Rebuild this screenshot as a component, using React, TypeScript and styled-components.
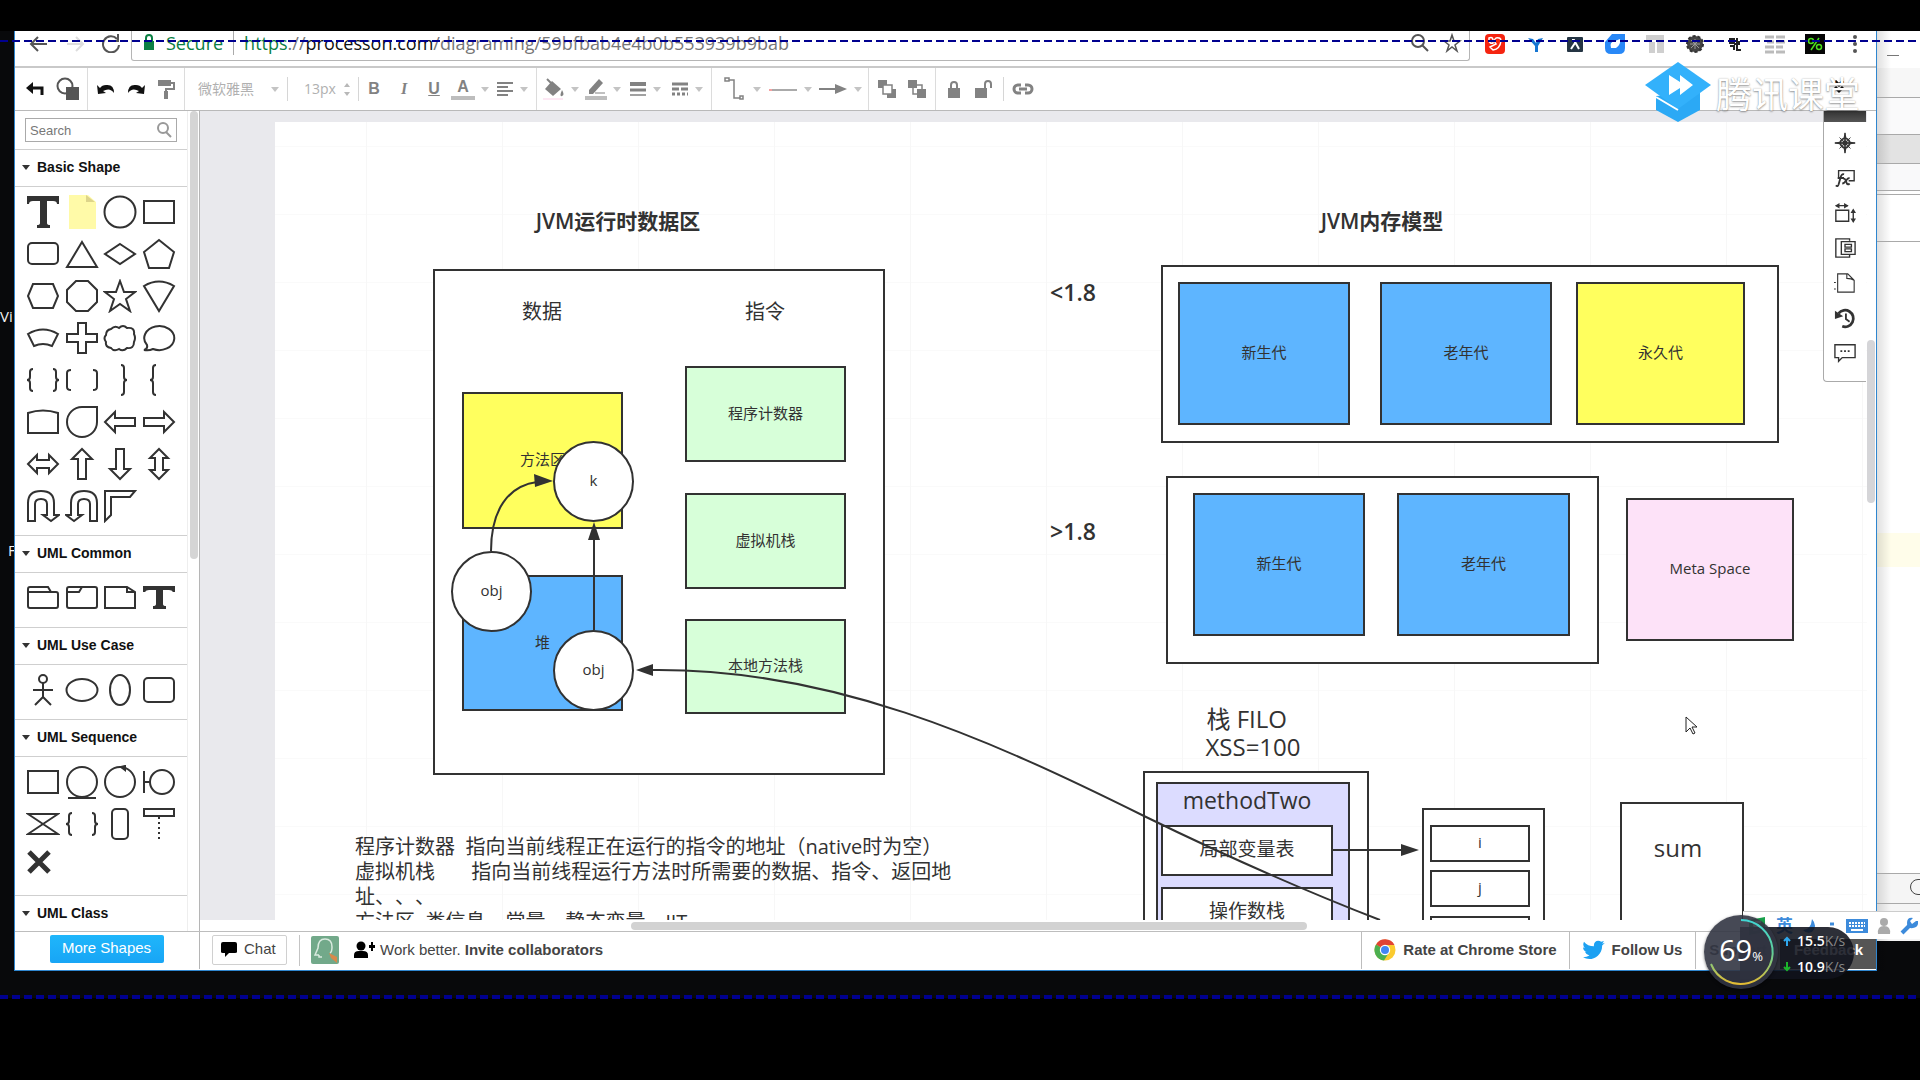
import React from 'react';
import styled, { createGlobalStyle, css } from 'styled-components';

const SANS = '"Liberation Sans", Arial, "Noto Sans CJK SC", sans-serif';
const HUMAN = '"Open Sans", "Noto Sans CJK SC", sans-serif';
const INK = '#323232';

const GlobalStyle = createGlobalStyle`
  * { box-sizing: border-box; }
  body { margin: 0; background: #000; text-spacing-trim: space-all; }
  button, input, select { font: inherit; color: inherit; margin: 0; padding: 0; border: 0; background: none; outline: none; }
  a { color: inherit; text-decoration: none; }
`;

/* ---------- desktop ---------- */

const Desktop = styled.div`
  position: relative;
  display: flex;
  height: 100vh;
  padding: 31px 0 109px;
  overflow: hidden;
  background: linear-gradient(#000 31px, #08090b 31px, #08090b calc(100vh - 82px), #000 calc(100vh - 82px));
  font-family: ${SANS};
  color: #333;
`;

const LeftEdge = styled.div`
  position: relative;
  flex: 0 0 14px;
  overflow: hidden;
  color: #f2f2f2;
  font: 15px/20px ${HUMAN};
`;

const DesktopLabel = styled.span<{ $x: number; $y: number }>`
  position: absolute;
  left: ${p => p.$x}px;
  top: ${p => p.$y}px;
`;

const RightEdge = styled.div`
  flex: 0 0 43px;
  display: flex;
  flex-direction: column;
  overflow: hidden;
  background: #fff;
`;

const Strip = styled.div<{ $h: number; $bg: string; $line?: boolean }>`
  flex: 0 0 ${p => p.$h}px;
  position: relative;
  overflow: hidden;
  background: linear-gradient(90deg, rgba(0, 0, 0, 0.12), transparent 14px), ${p => p.$bg};
  border-bottom: ${p => (p.$line ? '1px solid #a9a9a9' : '0')};
`;

const MinimizeMark = styled.i`
  display: block;
  width: 12px;
  height: 1px;
  margin: 24px 0 0 10px;
  background: #777;
`;

const RoundKnob = styled.i`
  display: block;
  width: 18px;
  height: 16px;
  margin: 5px 0 0 33px;
  border: 1px solid #444;
  border-radius: 8px;
`;

const Dashes = styled.div<{ $top?: number; $bottom?: number; $h: number }>`
  position: absolute;
  left: 0;
  right: 0;
  ${p => (p.$top !== undefined ? `top: ${p.$top}px;` : `bottom: ${p.$bottom}px;`)}
  height: ${p => p.$h}px;
  background: repeating-linear-gradient(90deg, #00008f 0 8px, transparent 8px 12px);
  pointer-events: none;
`;

/* ---------- browser ---------- */

const Browser = styled.main`
  flex: 1;
  min-width: 0;
  display: flex;
  flex-direction: column;
  background: #fff;
  border: 1px solid #2f86cf;
  border-top: 0;
`;

const AddressRow = styled.header`
  flex: 0 0 37px;
  display: flex;
  align-items: flex-start;
  padding-left: 6px;
  border-bottom: 2px solid #c9c9c9;
  overflow: hidden;
`;

const NavButton = styled.button`
  width: 36px;
  height: 24px;
  display: grid;
  place-items: center;
`;

const AddressBox = styled.div`
  flex: 1;
  display: flex;
  align-items: center;
  height: 30px;
  margin-left: 2px;
  padding: 0 1px 6px 11px;
  border: solid #b5b5b5;
  border-width: 0 1px 1px;
  border-radius: 0 0 3px 3px;
  font: 18px/24px ${HUMAN};
  color: #777;
`;

const Secure = styled.span`
  display: flex;
  align-items: center;
  gap: 11px;
  padding-right: 10px;
  border-right: 1px solid #aaa;
  color: #0b8043;
`;

const Url = styled.span`
  flex: 1;
  padding-left: 10px;
  white-space: nowrap;
  em { font-style: normal; color: #0b8043; }
  b { font-weight: 400; color: #111; }
`;

const AddressIcon = styled.button`
  width: 32px;
  height: 24px;
  display: grid;
  place-items: center;
`;

const Extensions = styled.div`
  display: flex;
  padding: 0 3px;
`;

const Extension = styled.button`
  width: 40px;
  height: 32px;
  padding: 3px 0 0 3px;
  display: grid;
  justify-content: center;
  align-content: start;
`;

/* ---------- toolbar ---------- */

const Toolbar = styled.div`
  flex: 0 0 43px;
  display: flex;
  border-bottom: 1px solid #b9b9b9;
  color: #828282;
`;

const ToolGroup = styled.div<{ $last?: boolean }>`
  display: flex;
  align-items: center;
  padding: 0 3px;
  border-right: ${p => (p.$last ? '0' : '1px solid #dcdcdc')};
`;

const Tool = styled.button<{ $dark?: boolean; $w?: number }>`
  width: ${p => p.$w ?? 30}px;
  height: 36px;
  display: flex;
  align-items: center;
  justify-content: center;
  gap: 6px;
  color: ${p => (p.$dark ? '#111' : 'inherit')};
`;

const Caret = styled.i`
  border: 4px solid transparent;
  border-top: 5px solid #c4c4c4;
  border-bottom: 0;
`;

const Field = styled.label<{ $w: number; $indent: number }>`
  display: flex;
  align-items: center;
  justify-content: space-between;
  width: ${p => p.$w}px;
  height: 24px;
  padding: 0 8px 0 ${p => p.$indent}px;
  border-right: 1px solid #d6d6d6;
  color: #b0b0b0;
  font: 14px/24px ${HUMAN};
  select { appearance: none; width: 70px; }
  input { width: 36px; }
`;

const Spin = styled.span`
  display: grid;
  gap: 5px;
  &::before { content: ''; border: 3px solid transparent; border-bottom: 4px solid #b8b8b8; border-top: 0; }
  &::after { content: ''; border: 3px solid transparent; border-top: 4px solid #b8b8b8; border-bottom: 0; }
`;

const ShortRule = styled.i`
  width: 1px;
  height: 24px;
  margin: 0 4px;
  background: #d6d6d6;
`;

const Glyph = styled.span<{ $italic?: boolean; $under?: boolean; $bar?: boolean }>`
  font: ${p => (p.$italic ? 'italic ' : '')}bold 16px/18px ${p => (p.$italic ? '"Liberation Serif", serif' : SANS)};
  text-decoration: ${p => (p.$under ? 'underline' : 'none')};
  ${p => p.$bar && css`padding: 0 6px; border-bottom: 4px solid #bdbdbd;`}
`;

/* ---------- body ---------- */

const Body = styled.div`
  flex: 1;
  min-height: 0;
  display: flex;
`;

const Sidebar = styled.aside`
  flex: 0 0 185px;
  display: flex;
  border-right: 1px solid #b5b5b5;
  overflow: hidden;
`;

const SidebarContent = styled.div`
  flex: 0 0 173px;
  display: flex;
  flex-direction: column;
  border-right: 1px solid #eee;
  overflow: hidden;
`;

const SidebarThumb = styled.div`
  width: 8px;
  height: 448px;
  margin: 0 0 0 2px;
  background: #d5d5d5;
  border-radius: 4px;
`;

const SearchRow = styled.div`
  flex: none;
  padding: 7px 10px;
  border-bottom: 1px solid #cfcfcf;
`;

const SearchBox = styled.label`
  display: flex;
  align-items: center;
  height: 24px;
  padding: 0 4px;
  border: 1px solid #aaa;
  font-size: 13px;
  color: #666;
  input { flex: 1; min-width: 0; }
  input::placeholder { color: #777; opacity: 1; }
`;

const SectionTitle = styled.button`
  flex: none;
  display: flex;
  align-items: center;
  gap: 7px;
  width: 100%;
  height: 37px;
  padding: 0 7px 2px;
  border-bottom: 1px solid #cfcfcf;
  color: #111;
  font-size: 14px;
  font-weight: bold;
  i { border: 4px solid transparent; border-top: 5px solid #333; border-bottom: 0; }
`;

const ShapeGrid = styled.div`
  flex: none;
  display: grid;
  grid-template-columns: repeat(4, 1fr);
  grid-auto-rows: 42px;
  padding: 4px 9px 8px;
  border-bottom: 1px solid #cfcfcf;
`;

const ShapeButton = styled.button`
  display: grid;
  place-items: center;
`;

const Workspace = styled.section`
  flex: 1;
  min-width: 0;
  display: flex;
  background: #fff;
`;

const CanvasColumn = styled.div`
  flex: 1;
  min-width: 0;
  display: flex;
  flex-direction: column;
`;

const Stage = styled.div`
  position: relative;
  flex: 1;
  min-height: 0;
  display: flex;
  padding: 11px 0 0 75px;
  overflow: hidden;
  background: #e9e9ed;
`;

const Page = styled.div`
  position: relative;
  flex: 1;
  background-color: #fff;
  background-image: linear-gradient(90deg, #f7f7f7 1px, transparent 1px), linear-gradient(#fafafa 1px, transparent 1px);
  background-size: 136px 136px, 136px 68px;
  background-position: 91px 24px, 24px 24px;
`;

const HTrack = styled.div`
  flex: 0 0 11px;
  padding: 2px 0 1px 431px;
`;

const HThumb = styled.div`
  width: 676px;
  height: 8px;
  border-radius: 4px;
  background: #d2d2d2;
`;

const VTrack = styled.div`
  flex: 0 0 9px;
  padding: 229px 1px 0 0;
`;

const VThumb = styled.div`
  height: 163px;
  border-radius: 4px;
  background: #d5d5d8;
`;

const Dock = styled.nav`
  position: absolute;
  top: 0;
  right: 1px;
  width: 43px;
  display: flex;
  flex-direction: column;
  align-items: center;
  padding-bottom: 11px;
  background: #fff;
  border: solid #aaa;
  border-width: 0 0 1px 1px;
  border-bottom-left-radius: 4px;
`;

const DockHandle = styled.div`
  align-self: stretch;
  height: 11px;
  margin-bottom: 3px;
  background: linear-gradient(#333, #555);
`;

const DockButton = styled.button`
  width: 40px;
  height: 35px;
  display: grid;
  place-items: center;
`;

/* ---------- diagram ---------- */

const Node = styled.div<{ $x: number; $y: number; $w: number; $h: number; $fill: string; $round?: boolean; $size: number; $top?: boolean }>`
  position: absolute;
  left: ${p => p.$x}px;
  top: ${p => p.$y}px;
  width: ${p => p.$w}px;
  height: ${p => p.$h}px;
  display: flex;
  align-items: ${p => (p.$top ? 'flex-start' : 'center')};
  justify-content: center;
  border: 2px solid ${INK};
  border-radius: ${p => (p.$round ? '50%' : '0')};
  background: ${p => p.$fill};
  padding-bottom: 2px;
  font: ${p => p.$size}px/${p => p.$size + 10}px ${HUMAN};
  white-space: pre;
  color: ${INK};
`;

const Label = styled.div<{ $x: number; $y: number; $w: number; $size?: number; $bold?: boolean; $left?: boolean; $lh?: number }>`
  position: absolute;
  left: ${p => p.$x}px;
  top: ${p => p.$y}px;
  width: ${p => p.$w}px;
  font: ${p => (p.$bold ? 600 : 400)} ${p => p.$size ?? 20}px/${p => p.$lh ?? 26}px ${HUMAN};
  text-align: ${p => (p.$left ? 'left' : 'center')};
  white-space: pre;
  color: ${INK};
`;

const Wires = styled.svg`
  position: absolute;
  left: 0;
  top: 0;
  width: 100%;
  height: 100%;
  pointer-events: none;
`;

const Pointer = styled.svg`
  position: absolute;
  left: 1410px;
  top: 594px;
`;

/* ---------- footer ---------- */

const Footer = styled.footer`
  flex: 0 0 39px;
  display: flex;
  padding-bottom: 1px;
  border-top: 1px solid #bdbdbd;
  font-size: 15px;
  line-height: 18px;
  color: #444;
`;

const FooterLeft = styled.div`
  flex: 0 0 185px;
  display: flex;
  align-items: center;
  justify-content: center;
  padding: 0 1px 3px 0;
  border-right: 1px solid #b5b5b5;
`;

const MoreShapes = styled.button`
  width: 114px;
  height: 28px;
  padding-bottom: 2px;
  border-radius: 2px;
  background: linear-gradient(#1fb6fb, #18a5f5);
  color: #fff;
`;

const ChatButton = styled.button`
  display: flex;
  align-items: center;
  gap: 7px;
  width: 75px;
  height: 30px;
  margin: 3px 0 0 12px;
  padding: 0 0 2px 8px;
  border: 1px solid #d0d0d0;
  border-radius: 2px;
`;

const FooterRule = styled.i`
  width: 1px;
  margin: 3px 11px 3px 12px;
  background: #c4c4c4;
`;

const Avatar = styled.svg`
  margin-top: 4px;
`;

const Invite = styled.a`
  display: flex;
  align-items: center;
  gap: 5px;
  margin-left: 14px;
  padding-bottom: 2px;
`;

const Grow = styled.div`
  flex: 1;
`;

const FooterLink = styled.a<{ $w: number; $dark?: boolean }>`
  width: ${p => p.$w}px;
  display: flex;
  align-items: center;
  justify-content: center;
  gap: 7px;
  padding-bottom: 2px;
  border-left: 1px solid #bdbdbd;
  font-weight: bold;
  white-space: nowrap;
  ${p => p.$dark && css`background: #555; color: #fff; border-left-color: #555;`}
`;

/* ---------- overlays ---------- */

const Watermark = styled.div`
  position: absolute;
  top: 62px;
  right: 60px;
  display: flex;
  align-items: center;
  gap: 5px;
  color: #fff;
  font: 36px/60px "Noto Sans CJK SC", sans-serif;
  text-shadow: 0 1px 2px rgba(0, 0, 0, 0.4), 0 0 1px rgba(0, 0, 0, 0.25);
  pointer-events: none;
`;

const Expand = styled.button`
  margin-left: auto;
  padding-right: 30px;
  color: #111;
`;

const ImeBar = styled.div`
  position: absolute;
  right: 0;
  bottom: 141px;
  width: 177px;
  height: 28px;
  display: flex;
  align-items: center;
  gap: 9px;
  padding-left: 4px;
  border-top: 1px solid #ccc;
  background: #fff;
  color: #3d8bdb;
  font: bold 17px/24px ${HUMAN};
  white-space: nowrap;
`;

const Speed = styled.div`
  position: absolute;
  right: 66px;
  bottom: 91px;
  display: flex;
  align-items: center;
  width: 150px;
  height: 74px;
`;

const SpeedPill = styled.div`
  position: absolute;
  inset: 12px 0 10px 36px;
  display: flex;
  flex-direction: column;
  gap: 6px;
  padding: 4px 0 0 43px;
  border-radius: 0 26px 26px 0;
  background: rgba(16, 18, 28, 0.88);
  color: #888;
  font: 14px/20px ${HUMAN};
  b { color: #fff; font-weight: 600; }
`;

const SpeedLine = styled.span`
  display: flex;
  align-items: center;
  svg { margin-right: 6px; }
`;

const Dial = styled.div`
  position: relative;
  display: grid;
  place-items: center;
  width: 74px;
  height: 74px;
  padding-top: 2px;
  border-radius: 50%;
  background: rgba(50, 53, 66, 0.9);
  box-shadow: 0 1px 3px rgba(0, 0, 0, 0.5);
  color: #fff;
  font: 29px/34px ${HUMAN};
  svg { position: absolute; inset: 0; }
  small { font-size: 13px; }
`;

/* ---------- icon drawings ---------- */

const SHAPES: Record<string, React.ReactNode> = {
  text: <path d="M1 1h32v8h-2q0-3-4-3h-6v22q0 2 3 2v3H11v-3q3 0 3-2V6H7q-4 0-4 3H1z" fill={INK} stroke="none" />,
  textLow: <path d="M1 5h32v6h-2q-1-2-4-2h-6v14q0 2 3 2v3H11v-3q3 0 3-2V9H7q-3 0-4 2H1z" fill={INK} stroke="none" />,
  note: <><path d="M4 0h19l8 7v27H4z" fill="#fffaa8" stroke="none" /><path d="M21 0v7h9z" fill="#ddd48a" stroke="none" /></>,
  circle: <circle cx="17" cy="17" r="15.5" />,
  rect: <path d="M2 6h30v22H2z" />,
  rounded: <rect x="2" y="6" width="30" height="21" rx="4" />,
  triangle: <path d="M17 5L32 30H2z" />,
  diamond: <path d="M17 7l15 10-15 10L2 17z" />,
  pentagon: <path d="M17 3l15 12-5 16H7L2 15z" />,
  hexagon: <path d="M7 5h20l5 12-5 12H7L2 17z" />,
  octagon: <path d="M11 2h12l9 9v12l-9 9H11l-9-9V11z" />,
  star: <path d="M17 2l4 11h11l-9 7 4 12-10-7-10 7 4-12-9-7h11z" />,
  cone: <path d="M2 7q15-9 30 0L17 32z" />,
  fan: <path d="M2 13q15-9 30 0l-6 12q-9-4-18 0z" />,
  cross: <path d="M13 2h8v11h11v8H21v11h-8V21H2v-8h11z" />,
  cloud: <path d="M8 8q4-4 8-1 4-4 8 0 8-1 7 6 2 4 0 8 0 7-7 6-4 4-8 1-5 3-8-1-6-1-5-6-3-4 0-7 0-5 5-6z" />,
  bubble: <path d="M5 24A15 12 0 1 1 11 28Q7 30 2 29q4-1 3-5z" />,
  braces: <path d="M7 6q-3 0-3 3v5q0 3-3 3 3 0 3 3v5q0 3 3 3M27 6q3 0 3 3v5q0 3 3 3-3 0-3 3v5q0 3-3 3" />,
  brackets: <path d="M6 7q-4 0-4 3v14q0 3 4 3M28 7q4 0 4 3v14q0 3-4 3" />,
  braceR: <path d="M18 2q3 0 3 3v9q0 3 3 3-3 0-3 3v9q0 3-3 3" />,
  braceL: <path d="M14 2q-3 0-3 3v9q0 3-3 3 3 0 3 3v9q0 3 3 3" />,
  arch: <path d="M2 8q15-5 30 0v20H2z" />,
  drop: <path d="M17 2h15v15A15 15 0 1 1 17 2z" />,
  left: <path d="M2 17L12 7v6h20v8H12v6z" />,
  right: <path d="M32 17L22 7v6H2v8h20v6z" />,
  both: <path d="M2 17l9-9v5h12V8l9 9-9 9v-5H11v5z" />,
  up: <path d="M17 2l10 10h-6v20h-8V12H7z" />,
  down: <path d="M17 32L7 22h6V2h8v20h6z" />,
  updown: <path d="M17 2l9 9h-5v12h5l-9 9-9-9h5V11H8z" />,
  uturn: <path d="M2 32V14Q2 2 15 2t13 12v12h5l-8 6-8-6h4V15q0-5-6-5t-6 5v17z" />,
  uturnL: <path d="M32 32V14Q32 2 19 2T6 14v12H1l8 6 8-6h-4V15q0-5 6-5t6 5v17z" />,
  corner: <path d="M2 2h30l-5 6H8v18l-6 6z" />,
  pkg: <path d="M2 10V8q0-2 2-2h18l3 5h5q2 0 2 2v12q0 2-2 2H4q-2 0-2-2zM2 11h23" />,
  frame: <path d="M4 6h26q2 0 2 2v17q0 2-2 2H4q-2 0-2-2V8q0-2 2-2zM2 11h12l3-5" />,
  doc: <path d="M2 6h22l8 5v16H2zM24 6v5h8" />,
  actor: <><circle cx="17" cy="6" r="4" /><path d="M17 10v14M7 17h20M17 24l-8 8M17 24l8 8" /></>,
  ellipse: <ellipse cx="17" cy="17" rx="15.500" ry="11" />,
  oval: <ellipse cx="17" cy="17" rx="10" ry="15" />,
  roundBox: <rect x="2" y="5" width="30" height="24" rx="4" />,
  entity: <><circle cx="17" cy="17" r="15" /><path d="M3 33h28" /></>,
  control: <><circle cx="17" cy="17" r="15" /><path d="M22 1l-4 1 4 3z" fill={INK} /></>,
  boundary: <><circle cx="20" cy="17" r="12" /><path d="M2 6v22M2 17h6" /></>,
  hourglass: <path d="M2 7h30L2 27h30z" />,
  pill: <rect x="9" y="2" width="16" height="30" rx="4" />,
  lifeline: <><path d="M2 2h30v7H2z" /><path d="M17 10v22" strokeDasharray="2 3" /></>,
  destroy: <path d="M3 3l20 20M23 3L3 23" strokeWidth="5" />,
};

const PALETTE = [
  { title: 'Basic Shape', items: ['text', 'note', 'circle', 'rect', 'rounded', 'triangle', 'diamond', 'pentagon', 'hexagon', 'octagon', 'star', 'cone', 'fan', 'cross', 'cloud', 'bubble', 'braces', 'brackets', 'braceR', 'braceL', 'arch', 'drop', 'left', 'right', 'both', 'up', 'down', 'updown', 'uturn', 'uturnL', 'corner'] },
  { title: 'UML Common', items: ['pkg', 'frame', 'doc', 'textLow'] },
  { title: 'UML Use Case', items: ['actor', 'ellipse', 'oval', 'roundBox'] },
  { title: 'UML Sequence', items: ['rect', 'entity', 'control', 'boundary', 'hourglass', 'braces', 'pill', 'lifeline', 'destroy'] },
  { title: 'UML Class', items: [] },
];

const Svg = ({ w = 20, h = 20, children }: { w?: number; h?: number; children: React.ReactNode }) => (
  <svg width={w} height={h} viewBox={`0 0 ${w} ${h}`} fill="none" stroke="currentColor" strokeWidth="2" aria-hidden="true">{children}</svg>
);

const Undo = () => <path d="M1 6l1 9 8-1-3-2q7-4 11 2 0-9-8-8-4 0-6 3z" fill="currentColor" stroke="none" />;

const DOCK_ICONS: [string, React.ReactNode][] = [
  ['Navigator', <><circle cx="12" cy="12" r="5" /><path d="M12 1v22M1 12h22" strokeWidth="1.5" /><path d="M12 0l2 8h-4zM12 24l2-8h-4zM0 12l8-2v4zM24 12l-8-2v4z" fill="currentColor" stroke="none" /><path d="M6 6l12 12M18 6L6 18" strokeWidth="1" /><circle cx="12" cy="12" r="2" /></>],
  ['Formula', <><path d="M5 11V4h17v11h-6" strokeWidth="1.500" /><path d="M11 8q-3-1-4 4l-2 7q-1 3-3 1M4 12h7M10 13q2-1 3 2l1 3q1 2 3 0M17 12q-2 0-4 3t-4 3" strokeWidth="2" /></>],
  ['Metric', <><path d="M2 9h14v12H2zM2 4h13M21 9v12" strokeWidth="1.500" /><path d="M1 4l5-3v6zM16 4l-5-3v6zM21 7l3 5h-6zM21 23l3-5h-6z" fill="currentColor" stroke="none" /></>],
  ['Pages', <><path d="M17 4V2H2v20h15v-3" strokeWidth="1.500" /><path d="M8 5h15v14H8z" strokeWidth="1.500" /><path d="M12 8h7v3h-7zM12 13h7v3h-7z" strokeWidth="1.500" /></>],
  ['Page setup', <><path d="M4 2h11l7 7v13H4zM14 2v5q5 0 8 2" strokeWidth="1.200" /><path d="M1 11v1M1 18v1" /></>],
  ['History', <><path d="M5 7a9 9 0 1 1 4 14" strokeWidth="3" /><path d="M1 4v9l9-3z" fill="currentColor" stroke="none" /><path d="M13 7v6l4 3" /></>],
  ['Comments', <><path d="M1 3h22v14H9l-4 4v-4H1z" strokeWidth="1.500" /><path d="M7 10h2M11 10h2M15 10h2" /></>],
];

/* ---------- diagram data ---------- */

const BLUE = '#5eb5ff';
const YELLOW = '#ffff5e';
const GREEN = '#d7ffd9';

type Shape = { x: number; y: number; w: number; h: number; fill?: string; t?: string; round?: boolean; size?: number; top?: boolean };

const NODES: Shape[] = [
  { x: 158, y: 147, w: 452, h: 506 },
  { x: 187, y: 270, w: 161, h: 137, fill: YELLOW, t: '方法区' },
  { x: 187, y: 453, w: 161, h: 136, fill: BLUE, t: '堆' },
  { x: 410, y: 244, w: 161, h: 96, fill: GREEN, t: '程序计数器' },
  { x: 410, y: 371, w: 161, h: 96, fill: GREEN, t: '虚拟机栈' },
  { x: 410, y: 497, w: 161, h: 95, fill: GREEN, t: '本地方法栈' },
  { x: 886, y: 143, w: 618, h: 178 },
  { x: 903, y: 160, w: 172, h: 143, fill: BLUE, t: '新生代' },
  { x: 1105, y: 160, w: 172, h: 143, fill: BLUE, t: '老年代' },
  { x: 1301, y: 160, w: 169, h: 143, fill: YELLOW, t: '永久代' },
  { x: 891, y: 354, w: 433, h: 188 },
  { x: 918, y: 371, w: 172, h: 143, fill: BLUE, t: '新生代' },
  { x: 1122, y: 371, w: 173, h: 143, fill: BLUE, t: '老年代' },
  { x: 1351, y: 376, w: 168, h: 143, fill: '#fde2f8', t: 'Meta Space' },
  { x: 868, y: 649, w: 226, h: 300 },
  { x: 881, y: 660, w: 194, h: 280, fill: '#dcdcff', t: 'methodTwo  ', size: 23, top: true },
  { x: 886, y: 703, w: 172, h: 51, t: '局部变量表', size: 19 },
  { x: 886, y: 765, w: 172, h: 51, t: '操作数栈', size: 19 },
  { x: 1147, y: 686, w: 123, h: 260 },
  { x: 1155, y: 703, w: 100, h: 37, t: 'i' },
  { x: 1155, y: 748, w: 100, h: 37, t: 'j' },
  { x: 1155, y: 794, w: 100, h: 37 },
  { x: 1345, y: 680, w: 124, h: 200 },
  { x: 278, y: 319, w: 81, h: 81, t: 'k', round: true },
  { x: 176, y: 429, w: 81, h: 81, t: 'obj', round: true },
  { x: 278, y: 508, w: 81, h: 81, t: 'obj', round: true },
];

const NOTES = [
  '程序计数器  指向当前线程正在运行的指令的地址（native时为空）',
  '虚拟机栈       指向当前线程运行方法时所需要的数据、指令、返回地',
  '址、、、',
  '方法区  类信息、常量、静态变量、JIT',
].join('\n');

const Diagram = () => (
  <Page>
    {NODES.map((n, i) => (
      <Node key={i} $x={n.x} $y={n.y} $w={n.w} $h={n.h} $fill={n.fill ?? '#fff'} $round={n.round} $size={n.size ?? 15} $top={n.top}>
        {n.t}
      </Node>
    ))}
    <Label $x={218} $y={86} $w={250} $size={21} $bold>JVM运行时数据区</Label>
    <Label $x={217} $y={177} $w={100}>数据</Label>
    <Label $x={440} $y={177} $w={100}>指令</Label>
    <Label $x={982} $y={86} $w={250} $size={21} $bold>JVM内存模型</Label>
    <Label $x={748} $y={157} $w={100} $size={23} $bold>&lt;1.8</Label>
    <Label $x={748} $y={396} $w={100} $size={23} $bold>&gt;1.8</Label>
    <Label $x={878} $y={583} $w={200} $size={24} $lh={28}>{'栈 FILO  \nXSS=100'}</Label>
    <Label $x={1353} $y={712} $w={100} $size={24} $lh={28}>sum</Label>
    <Label $x={80} $y={712} $w={640} $lh={25} $left>{NOTES}</Label>
    <Wires stroke={INK} fill="none" strokeWidth="2">
      <path d="M216 429C216 388 233 364 262 360" />
      <path d="M319 508V415" />
      <path d="M376 548C555 546 710 615 869 694C955 736 1025 767 1105 798" />
      <path d="M1058 728h70" />
      <g fill={INK} stroke="none">
        <path d="M278 359l-18 6-1-13z" />
        <path d="M319 400l6 18h-12z" />
        <path d="M361 548l17-6v12z" />
        <path d="M1144 728l-18-6v12z" />
      </g>
    </Wires>
    <Pointer width="13" height="20" viewBox="0 0 13 20" aria-hidden="true">
      <path d="M1 1v15l4-4 3 6 2-1-3-6h5z" fill="#fff" stroke="#222" />
    </Pointer>
  </Page>
);

const ChromeLogo = () => (
  <svg width="22" height="22" viewBox="0 0 22 22" aria-hidden="true">
    <circle cx="11" cy="11" r="10.500" fill="#fbcb2f" />
    <path d="M11 11L2 5.500A10.500 10.500 0 0 1 20.500 6H11z" fill="#e14335" />
    <path d="M2 5.500A10.500 10.500 0 0 0 10 21.500l5-8-4-2.500z" fill="#4caf50" />
    <circle cx="11" cy="11" r="5.200" fill="#fff" />
    <circle cx="11" cy="11" r="4" fill="#4285f4" />
  </svg>
);

export default function App() {
  return (
    <Desktop>
      <GlobalStyle />
      <LeftEdge>
        <DesktopLabel $x={0} $y={275}>Vi</DesktopLabel>
        <DesktopLabel $x={8} $y={509}>F</DesktopLabel>
      </LeftEdge>

      <Browser>
        <AddressRow>
          <NavButton aria-label="Back"><Svg><path d="M18 11H3M9 4l-7 7 7 7" stroke="#555" /></Svg></NavButton>
          <NavButton aria-label="Forward"><Svg><path d="M2 11h15M11 4l7 7-7 7" stroke="#ddd" /></Svg></NavButton>
          <NavButton aria-label="Reload"><Svg><path d="M16 6a8 8 0 1 0 2 6M17 1v7h-7" stroke="#555" /></Svg></NavButton>
          <AddressBox>
            <Secure>
              <svg width="12" height="17" viewBox="0 0 12 17" aria-hidden="true"><path d="M1 7h10v9H1z" fill="#0b8043" /><path d="M3 8V4q0-3 3-3t3 3v4" fill="none" stroke="#0b8043" strokeWidth="2" /></svg>
              Secure
            </Secure>
            <Url><em>https</em>://<b>processon.com</b>/diagraming/59bfbab4e4b0b553939b9bab</Url>
            <AddressIcon aria-label="Zoom"><Svg><circle cx="8" cy="8" r="6" stroke="#555" /><path d="M12 12l6 6M5 8h6" stroke="#555" /></Svg></AddressIcon>
            <AddressIcon aria-label="Bookmark"><Svg><path d="M10 2l2 6h6l-5 4 2 6-5-4-5 4 2-6-5-4h6z" stroke="#555" strokeWidth="1.500" /></Svg></AddressIcon>
          </AddressBox>
          <Extensions>
            <Extension aria-label="Capture"><Svg><rect width="20" height="20" rx="4" fill="#f52410" stroke="none" /><path d="M4 4q5-2 4 5-3 1-4-2zM11 4q5-1 5 3-1 8-8 9l-3-3 6-3q-3-4 0-6z" stroke="#fff" strokeWidth="1.500" /></Svg></Extension>
            <Extension aria-label="Y tools"><Svg><path d="M3 4l5 1 3 4 2-4 5-1-5 8v6h-3v-6z" fill="#1676d2" stroke="none" /></Svg></Extension>
            <Extension aria-label="Lambda"><Svg><rect x="2" y="3" width="16" height="15" rx="1" fill="#253544" stroke="none" /><path d="M7 6h2l5 9M10 9l-4 6" stroke="#fff" /></Svg></Extension>
            <Extension aria-label="Bird"><Svg><path d="M7 0h13v14q0 6-6 6H6q-6 0-6-6V8z" fill="#2888f7" stroke="none" /><path d="M6 14q-2-6 4-7l5-2q1 6-4 9z" fill="#fff" stroke="none" /></Svg></Extension>
            <Extension aria-label="Panels"><Svg><path d="M1 1h18v5H1zM4 8h6v11H4zM12 8h7v11h-7z" fill="#cfcfcf" stroke="none" /></Svg></Extension>
            <Extension aria-label="Flower"><Svg><circle cx="10" cy="10" r="8" fill="#444" stroke="#333" strokeDasharray="3 2" /><path d="M5 10h10M10 5v10M6 6l8 8M14 6l-8 8" stroke="#999" strokeWidth="1" /></Svg></Extension>
            <Extension aria-label="QR code"><Svg><path d="M5 5h4v4H5zM12 4v4h3M5 12h4v4M12 11v5h4M9 10h6" stroke="#222" /></Svg></Extension>
            <Extension aria-label="Grid"><Svg><path d="M0 3h9M11 3h9M2 8h7M11 8h9M0 13h9M11 13h7M0 18h9M11 18h9" stroke="#bbb" strokeWidth="3" /></Svg></Extension>
            <Extension aria-label="Percent"><Svg><path d="M0 0h20v20H0z" fill="#050505" stroke="none" /><g stroke="#4be01e" strokeWidth="1.500"><circle cx="6" cy="7" r="2.500" /><circle cx="14" cy="13" r="2.500" /><path d="M14 4L6 16" /></g></Svg></Extension>
            <Extension aria-label="Menu"><Svg><g fill="#555" stroke="none"><circle cx="10" cy="3" r="2" /><circle cx="10" cy="10" r="2" /><circle cx="10" cy="17" r="2" /></g></Svg></Extension>
          </Extensions>
        </AddressRow>

        <Toolbar>
          <ToolGroup>
            <Tool $dark $w={33} aria-label="Return"><Svg><path d="M17 16v-7H6" strokeWidth="3" /><path d="M1 9l7-6v12z" fill="currentColor" stroke="none" /></Svg></Tool>
            <Tool $dark $w={33} aria-label="Shapes"><Svg w={24} h={24}><path d="M10 10h13v13H10z" fill="#555" stroke="none" /><circle cx="9" cy="9" r="7.500" stroke="#555" /></Svg></Tool>
          </ToolGroup>
          <ToolGroup>
            <Tool $dark aria-label="Undo"><Svg><Undo /></Svg></Tool>
            <Tool $dark aria-label="Redo"><Svg><g transform="matrix(-1 0 0 1 20 0)"><Undo /></g></Svg></Tool>
            <Tool aria-label="Format painter"><Svg><path d="M2 1h13v6H2z" fill="currentColor" stroke="none" /><path d="M15 4h3v6H10v3" /><path d="M8 12h4v8H8z" fill="currentColor" stroke="none" /></Svg></Tool>
          </ToolGroup>
          <ToolGroup>
            <Field $w={100} $indent={10} aria-label="Font family"><select aria-label="Font family" defaultValue="yahei"><option value="yahei">微软雅黑</option></select><Caret /></Field>
            <Field $w={71} $indent={16} aria-label="Font size"><input aria-label="Font size" defaultValue="13px" /><Spin /></Field>
            <Tool aria-label="Bold"><Glyph>B</Glyph></Tool>
            <Tool aria-label="Italic"><Glyph $italic>I</Glyph></Tool>
            <Tool aria-label="Underline"><Glyph $under>U</Glyph></Tool>
            <Tool $w={42} aria-label="Text colour"><Glyph $bar>A</Glyph><Caret /></Tool>
            <Tool $w={42} aria-label="Align"><Svg w={18} h={18}><path d="M1 3h16M1 7h11M1 11h16M1 15h11" /></Svg><Caret /></Tool>
          </ToolGroup>
          <ToolGroup>
            <Tool $w={42} aria-label="Fill"><Svg w={22} h={24}><path d="M9 4l9 8-8 7-8-7z" fill="currentColor" stroke="none" /><path d="M4 2l6 6" /><path d="M19 13q3 5 0 6t0-6z" fill="currentColor" stroke="none" /><path d="M0 22h20" stroke="#fde8f4" /></Svg><Caret /></Tool>
            <Tool $w={42} aria-label="Line colour"><Svg w={22} h={24}><path d="M14 2l4 4L8 17H4v-4z" fill="currentColor" stroke="none" /><path d="M10 16h10" strokeWidth="1" /><path d="M0 21h22" stroke="#bdbdbd" strokeWidth="4" /></Svg><Caret /></Tool>
            <Tool $w={42} aria-label="Line width"><Svg w={18} h={18}><path d="M1 4h16" strokeWidth="4" /><path d="M1 10h16" strokeWidth="3" /><path d="M1 15h16" strokeWidth="1.500" /></Svg><Caret /></Tool>
            <Tool $w={42} aria-label="Line style"><Svg w={18} h={18}><path d="M1 4h16" strokeWidth="3" /><path d="M1 9h16" strokeWidth="3" strokeDasharray="7 2" /><path d="M1 14h16" strokeWidth="3" strokeDasharray="3 2" /></Svg><Caret /></Tool>
          </ToolGroup>
          <ToolGroup>
            <Tool $w={50} aria-label="Connector type"><Svg w={28} h={24}><path d="M10 3h5v18h6M6 1h4v3H6zM21 19h3v3h-3z" strokeWidth="1.500" /></Svg><Caret /></Tool>
            <Tool $w={50} aria-label="Line start"><Svg w={30} h={20}><path d="M1 11h28" stroke="#aaa" /><path d="M1 11h3" stroke="#f4a0a0" /></Svg><Caret /></Tool>
            <Tool $w={50} aria-label="Line end"><Svg w={30} h={20}><path d="M1 10h18" /><path d="M29 10l-12-5v10z" fill="currentColor" stroke="none" /></Svg><Caret /></Tool>
          </ToolGroup>
          <ToolGroup>
            <Tool aria-label="Bring to front"><Svg><path d="M1 1h9v8H1zM10 10h9v9h-9z" fill="currentColor" stroke="none" /><path d="M6 6h9v9H6z" fill="#fff" strokeWidth="1.500" /></Svg></Tool>
            <Tool aria-label="Send to back"><Svg><path d="M6 6h9v9H6z" strokeWidth="1.500" /><path d="M1 1h9v8H1zM10 10h9v9h-9z" fill="currentColor" stroke="none" /></Svg></Tool>
          </ToolGroup>
          <ToolGroup $last>
            <Tool aria-label="Lock"><Svg><path d="M4 9h12v10H4z" fill="currentColor" stroke="none" /><path d="M7 9V6q0-3 3-3t3 3v3" /></Svg></Tool>
            <Tool aria-label="Unlock"><Svg><path d="M1 9h12v10H1z" fill="currentColor" stroke="none" /><path d="M11 9V5q0-3 3-3t3 3v4" /></Svg></Tool>
            <ShortRule />
            <Tool aria-label="Link"><Svg w={22}><path d="M9 14H6a4 4 0 0 1 0-8h3M13 6h3a4 4 0 0 1 0 8h-3M7 10h8" strokeWidth="3" /></Svg></Tool>
          </ToolGroup>
          <Expand aria-label="Collapse header"><Svg w={14} h={14}><path d="M3 1l4 4 4-4M3 7l4 4 4-4" strokeWidth="3" /></Svg></Expand>
        </Toolbar>

        <Body>
          <Sidebar>
            <SidebarContent>
              <SearchRow>
                <SearchBox>
                  <input aria-label="Search" placeholder="Search" />
                  <Svg w={16} h={16}><circle cx="7" cy="6" r="5" stroke="#999" /><path d="M10 10l5 5" stroke="#999" /></Svg>
                </SearchBox>
              </SearchRow>
              {PALETTE.map(s => (
                <React.Fragment key={s.title}>
                  <SectionTitle><i />{s.title}</SectionTitle>
                  {s.items.length > 0 && (
                    <ShapeGrid>
                      {s.items.map(name => (
                        <ShapeButton key={name} aria-label={name}>
                          <svg width="34" height="34" viewBox="0 0 34 34" fill="none" stroke={INK} strokeWidth="2">{SHAPES[name]}</svg>
                        </ShapeButton>
                      ))}
                    </ShapeGrid>
                  )}
                </React.Fragment>
              ))}
            </SidebarContent>
            <SidebarThumb />
          </Sidebar>
          <Workspace>
            <CanvasColumn>
              <Stage>
                <Diagram />
                <Dock aria-label="Panels">
                  <DockHandle />
                  {DOCK_ICONS.map(([name, art]) => (
                    <DockButton key={name} aria-label={name}>
                      <svg width="22" height="22" viewBox="0 0 24 24" fill="none" stroke="currentColor" strokeWidth="2">{art}</svg>
                    </DockButton>
                  ))}
                </Dock>
              </Stage>
              <HTrack><HThumb /></HTrack>
            </CanvasColumn>
            <VTrack><VThumb /></VTrack>
          </Workspace>
        </Body>

        <Footer>
          <FooterLeft><MoreShapes>More Shapes</MoreShapes></FooterLeft>
          <ChatButton>
            <svg width="16" height="16" viewBox="0 0 16 16" aria-hidden="true"><path d="M2 1h12q2 0 2 2v8q0 1-2 1H8l-4 4v-4H2q-2 0-2-1V3q0-2 2-2z" fill="#000" /></svg>
            Chat
          </ChatButton>
          <FooterRule />
          <Avatar width="28" height="28" viewBox="0 0 28 28" aria-hidden="true">
            <rect width="28" height="28" rx="2" fill="#72a98a" />
            <path d="M8 19H4l3-7q0-9 7-9t7 8q0 5-2 6M8 19v2h3" fill="none" stroke="#d9eadf" strokeWidth="1.500" />
            <path d="M18 17l8 4v6l-6-5z" fill="#d8894a" />
          </Avatar>
          <Invite href="#invite">
            <svg width="22" height="18" viewBox="0 0 22 18" aria-hidden="true"><circle cx="8" cy="5" r="4.500" fill="#000" /><path d="M1 17v-3q0-4 5-4h4q5 0 5 4v3zM16 4h2V1h2v3h2v3h-2v3h-2V7h-2z" fill="#000" /></svg>
            <span>Work better. <b>Invite collaborators</b></span>
          </Invite>
          <Grow />
          <FooterLink href="#rate" $w={208}><ChromeLogo />Rate at Chrome Store</FooterLink>
          <FooterLink href="#follow" $w={126}>
            <svg width="22" height="20" viewBox="0 0 24 22" aria-hidden="true"><path d="M24 3l-3 3c0 10-8 15-14 15q-4 0-7-2 4 0 7-2-4-1-5-4h2q-4-1-4-5l2 1Q-1 6 1 2q4 5 11 5c-1-5 4-8 8-5l3-1-2 3z" fill="#1da1f2" /></svg>
            Follow Us
          </FooterLink>
          <FooterLink href="#support" $w={85}>Support</FooterLink>
          <FooterLink href="#feedback" $w={96} $dark>Feedback</FooterLink>
        </Footer>
      </Browser>

      <RightEdge>
        <Strip $h={37} $bg="#fff"><MinimizeMark /></Strip>
        <Strip $h={30} $bg="#f7f7f7" $line />
        <Strip $h={37} $bg="#fafafb" $line />
        <Strip $h={29} $bg="#e3e3e3" $line />
        <Strip $h={27} $bg="#f9f9fa" $line />
        <Strip $h={4} $bg="#fff" $line />
        <Strip $h={47} $bg="#fff" $line />
        <Strip $h={291} $bg="#fff" />
        <Strip $h={34} $bg="#fffdea" />
        <Strip $h={307} $bg="#fff" $line />
        <Strip $h={30} $bg="#f5f5f5" $line><RoundKnob /></Strip>
        <Strip $h={37} $bg="#f5f5f5" />
        <Strip $h={60} $bg="#08090b" />
      </RightEdge>

      <Watermark>
        <svg width="66" height="60" viewBox="0 0 66 60" aria-hidden="true">
          <path d="M11 34v14l22 12 22-12V30z" fill="#2ba9f5" />
          <path d="M33 0l33 23-33 24L0 23z" fill="#33b1fb" />
          <path d="M11 35l22 13" stroke="#fff" strokeWidth="2" />
          <path d="M24 13l11 7v-7l13 10-13 10v-7l-11 7z" fill="#fff" />
        </svg>
        腾讯课堂
      </Watermark>

      <ImeBar>
        <Svg w={20} h={20}><path d="M2 4l16-3v15L2 19z" fill="#19a04b" stroke="none" /><path d="M14 6q-6-1-7 2t5 2q2 4-6 4" stroke="#fff" /></Svg>
        英
        <Svg w={16} h={16}><path d="M10 1q6 7 0 13-6 2-9-2 8 0 9-11z" fill="currentColor" stroke="none" /></Svg>
        <Svg w={10} h={16}><path d="M3 6h4" strokeWidth="3" /></Svg>
        <Svg w={22} h={16}><path d="M0 1h22v14H0z" fill="currentColor" stroke="none" /><path d="M3 5h16M3 8h16" stroke="#fff" strokeDasharray="2 1" /><path d="M5 12h12" stroke="#fff" /></Svg>
        <Svg w={14} h={18}><circle cx="7" cy="5" r="4" fill="#aaa" stroke="none" /><path d="M1 17q-1-8 6-8t6 8z" fill="#aaa" stroke="none" /></Svg>
        <Svg w={18} h={18}><path d="M2 16l8-8" strokeWidth="4" /><path d="M16 4l-4 3-2-3 3-3q-6-1-6 5t6 5 5-7z" fill="currentColor" stroke="none" /></Svg>
      </ImeBar>

      <Speed>
        <SpeedPill>
          <SpeedLine><Svg w={8} h={10}><path d="M4 10V2M1 5l3-3 3 3" stroke="#2ea8ee" /></Svg><b>15.5</b>K/s</SpeedLine>
          <SpeedLine><Svg w={8} h={10}><path d="M4 0v8M1 5l3 3 3-3" stroke="#1db52c" /></Svg><b>10.9</b>K/s</SpeedLine>
        </SpeedPill>
        <Dial>
          <svg width="74" height="74" viewBox="0 0 74 74" fill="none" strokeWidth="2" aria-hidden="true">
            <defs><linearGradient id="dial" x1="0" y1="1" x2="0" y2="0"><stop offset="0" stopColor="#e3bb33" /><stop offset="0.500" stopColor="#5fcf9a" /><stop offset="1" stopColor="#41d5d3" /></linearGradient></defs>
            <path d="M37 5A32 32 0 1 1 7 49" stroke="url(#dial)" />
          </svg>
          <span>69<small>%</small></span>
        </Dial>
      </Speed>

      <Dashes $top={40} $h={2} />
      <Dashes $bottom={81} $h={4} />
    </Desktop>
  );
}
